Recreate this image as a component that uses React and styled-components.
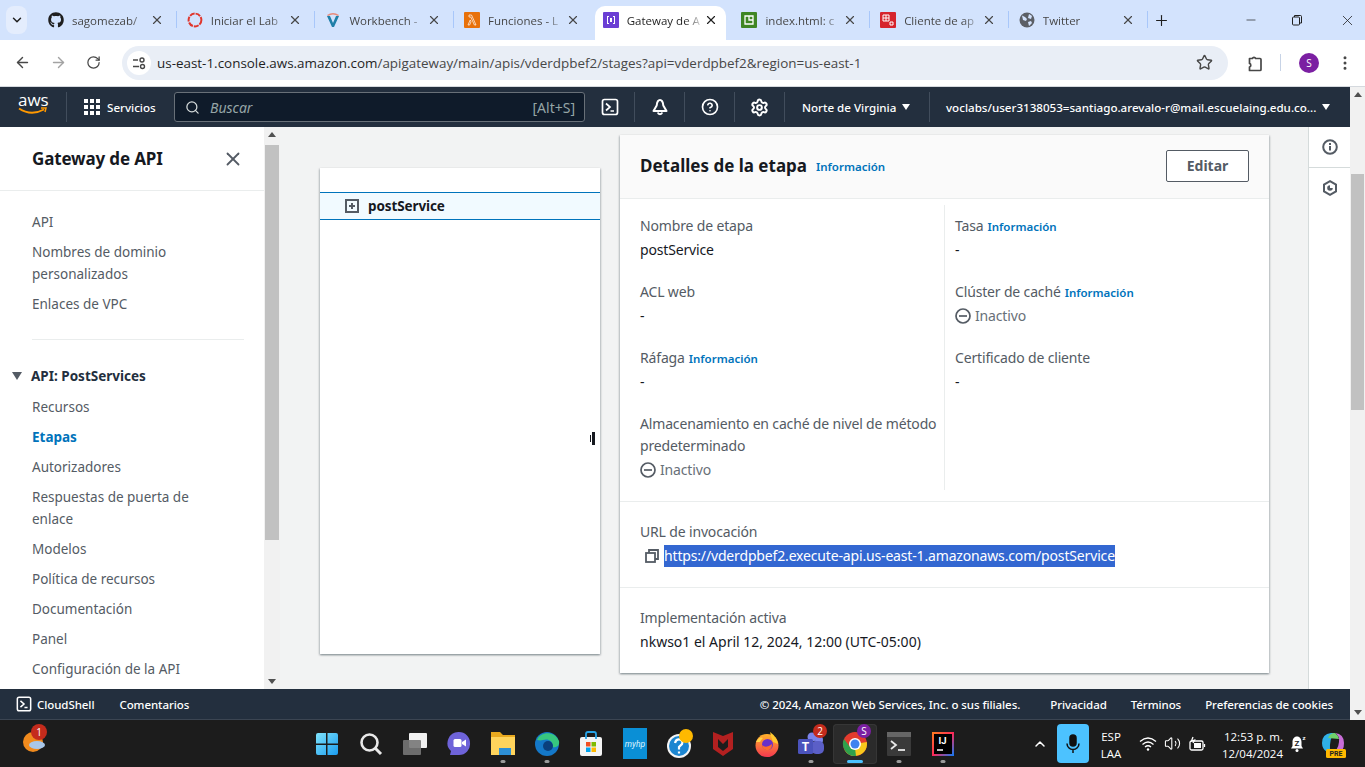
import React from "react";
import styled, { createGlobalStyle } from "styled-components";
import { FaGithub } from "react-icons/fa";
import {
  ChevronDown, X, Plus, Minus, ArrowLeft, ArrowRight, RotateCw, Star, EllipsisVertical,
  Search, CircleHelp, Settings, Volume2, ChevronUp,
} from "lucide-react";

const chromeFont = `"Open Sans", "Noto Sans", sans-serif`;
const awsFont = `"Noto Sans", "Open Sans", sans-serif`;

const Global = createGlobalStyle`
  html, body { margin: 0; padding: 0; height: 100%; overflow: hidden; background: #f2f3f3; }
  #root { height: 767px; width: 1365px; }
  * { box-sizing: border-box; }
`;

const Screen = styled.div`
  width: 1365px;
  height: 767px;
  display: flex;
  flex-direction: column;
  overflow: hidden;
  font-family: ${awsFont};
`;

/* browser top */
const TabStrip = styled.div`
  height: 40px;
  background: #d3e3fd;
  display: flex;
  align-items: flex-end;
  font-family: ${chromeFont};
  padding-left: 5px;
  flex: none;
`;
const TabSearch = styled.div`
  width: 21px;
  height: 28px;
  margin: 0 11px 6px 1px;
  border-radius: 8px;
  background: #e4edfd;
  display: flex;
  align-items: center;
  justify-content: center;
  color: #1f1f1f;
`;
const Tab = styled.div`
  width: 138.7px;
  height: 34px;
  display: flex;
  align-items: center;
  padding: 0 13px 6px 10px;
  position: relative;
  isolation: isolate;
  &::before {
    content: "";
    display: ${(p) => (p.$active ? "block" : "none")};
    position: absolute;
    inset: 0 5px 0 2px;
    z-index: -1;
    background: #fff;
    border-radius: 10px 10px 0 0;
  }
  &::after {
    content: "";
    display: ${(p) => (p.$sep ? "block" : "none")};
    position: absolute;
    right: 0;
    top: 5px;
    height: 17px;
    width: 1px;
    background: #a8c7fa;
  }
`;
const TabIcon = styled.span`
  width: 16px;
  height: 16px;
  flex: none;
  display: flex;
  align-items: center;
  justify-content: center;
  margin-right: 8px;
`;
const TabTitle = styled.span`
  flex: 1;
  font-size: 11.5px;
  white-space: nowrap;
  overflow: hidden;
  color: ${(p) => (p.$active ? "#1f1f1f" : "#474747")};
  -webkit-mask-image: linear-gradient(90deg, #000 75%, transparent 100%);
  mask-image: linear-gradient(90deg, #000 75%, transparent 100%);
`;
const NewTab = styled.div`
  width: 24px;
  margin: 0 0 11px 2px;
  display: flex;
  justify-content: center;
  color: #1f1f1f;
`;
const WinControls = styled.div`
  margin-left: auto;
  display: flex;
  align-self: flex-start;
  height: 40px;
  align-items: center;
  color: #1f1f1f;
`;
const WinButton = styled.div`
  width: ${(p) => p.$w || 46}px;
  margin-left: ${(p) => p.$ml || 0}px;
  display: flex;
  justify-content: center;
`;
const Toolbar = styled.div`
  height: 47px;
  flex: none;
  background: #fff;
  display: flex;
  align-items: center;
  padding: 0 0 1px 14px;
  border-bottom: 1px solid #d5d9de;
  font-family: ${chromeFont};
  color: #474747;
`;
const NavBtn = styled.div`
  width: 36px;
  display: flex;
  color: ${(p) => (p.$off ? "#a3a3a3" : "#474747")};
`;
const UrlPill = styled.div`
  width: 1106px;
  height: 34px;
  border-radius: 17px;
  background: #e9eef6;
  display: flex;
  align-items: center;
  padding: 0 15px 0 5px;
`;
const SiteChip = styled.div`
  width: 24px;
  height: 24px;
  border-radius: 50%;
  background: #fff;
  display: flex;
  align-items: center;
  justify-content: center;
  margin-right: 6px;
`;
const UrlText = styled.span`
  flex: 1;
  font-size: 13.43px;
  color: #1f1f1f;
  white-space: nowrap;
  span { color: #474747; }
`;
const ExtIcon = styled.svg`
  margin-left: 17px;
  flex: none;
`;
const ToolDivider = styled.div`
  width: 1px;
  height: 17px;
  background: #c7d3e6;
  margin: 0 18px 0 17px;
`;
const Avatar = styled.div`
  width: 20px;
  height: 20px;
  border-radius: 50%;
  background: #7b1fa2;
  color: #fff;
  font-size: 10px;
  display: flex;
  align-items: center;
  justify-content: center;
  margin-right: 17px;
`;

/* page + scroll */
const Viewport = styled.div`
  flex: 1;
  display: flex;
  min-height: 0;
`;
const Page = styled.div`
  flex: 1;
  display: flex;
  flex-direction: column;
  min-width: 0;
`;
const Scrollbar = styled.div`
  width: ${(p) => p.$w}px;
  flex: none;
  background: #f1f1f1;
  display: flex;
  flex-direction: column;
  align-items: center;
  justify-content: space-between;
  position: relative;
  padding: 5px 0;
`;
const Arrow = styled.div`
  width: 0;
  height: 0;
  border-left: 4px solid transparent;
  border-right: 4px solid transparent;
  ${(p) => (p.$down ? "border-top: 5px solid #505050;" : "border-bottom: 5px solid #505050;")}
`;
const Thumb = styled.div`
  position: absolute;
  left: 1px;
  right: 1px;
  top: ${(p) => p.$top}px;
  height: ${(p) => p.$h}px;
  background: #c1c1c1;
`;

/* aws nav */
const TopNav = styled.div`
  height: 40px;
  flex: none;
  background: #232f3e;
  display: flex;
  align-items: center;
  color: #fff;
  font-size: 11.6px;
  font-weight: 500;
`;
const LogoBox = styled.div`
  width: 67px;
  height: 30px;
  flex: none;
  padding-left: 18px;
  border-right: 1px solid #414d5c;
`;
const LogoWord = styled.div`
  font-family: "Open Sans", sans-serif;
  font-size: 17px;
  line-height: 17px;
  margin-top: -1px;
  color: #fff;
`;
const Smile = styled.svg`
  display: block;
  margin-top: -1px;
`;
const Services = styled.div`
  display: flex;
  align-items: center;
  width: 107px;
  padding-left: 17px;
  gap: 7px;
  flex: none;
`;
const Dots = styled.div`
  display: grid;
  grid-template-columns: repeat(3, 4px);
  gap: 2px;
  span { width: 4px; height: 4px; background: #fff; }
`;
const SearchBox = styled.div`
  width: 411px;
  height: 30px;
  flex: none;
  background: #0f1b2a;
  border: 1px solid #687078;
  border-radius: 3px;
  display: flex;
  align-items: center;
  padding: 0 9px 0 10px;
  color: #95a5a6;
  font-size: 14px;
  font-weight: 400;
`;
const SearchHint = styled.span`
  font-style: italic;
  margin-left: 10px;
  flex: 1;
`;
const NavIcon = styled.div`
  width: 50px;
  height: 30px;
  flex: none;
  display: flex;
  align-items: center;
  justify-content: center;
  border-right: 1px solid #414d5c;
`;
const NavText = styled.div`
  display: flex;
  align-items: center;
  white-space: nowrap;
  height: 30px;
  flex: none;
  padding: ${(p) => p.$pad};
  width: ${(p) => p.$w}px;
  ${(p) => (p.$sep ? "border-right: 1px solid #414d5c;" : "")}
`;
const Caret = styled.span`
  width: 0;
  height: 0;
  margin-left: 6px;
  border-left: 4.5px solid transparent;
  border-right: 4.5px solid transparent;
  border-top: 6px solid #fff;
  flex: none;
`;

/* body */
const Body = styled.div`
  flex: 1;
  display: flex;
  min-height: 0;
  background: #f2f3f3;
`;
const SideNav = styled.nav`
  width: 264px;
  flex: none;
  background: #fff;
  overflow: hidden;
  color: #545b64;
  font-size: 13.5px;
  line-height: 22px;
`;
const SideHead = styled.div`
  height: 64px;
  border-bottom: 1px solid #eaeded;
  display: flex;
  align-items: center;
  justify-content: space-between;
  padding: 0 20px 0 32px;
  color: #16191f;
  font-size: 17px;
  font-weight: 700;
  letter-spacing: -0.15px;
`;
const SideList = styled.div`
  padding: 20px 32px 0;
  display: flex;
  flex-direction: column;
  gap: 8px;
`;
const SideItem = styled.div`
  color: ${(p) => (p.$active ? "#0073bb" : "#545b64")};
  font-weight: ${(p) => (p.$active ? 700 : 400)};
`;
const SideRule = styled.div`
  height: 1px;
  background: #eaeded;
  margin: 24px 20px 25px 32px;
`;
const SideGroup = styled.div`
  display: flex;
  align-items: center;
  padding-left: 12px;
  color: #232f3e;
  font-weight: 700;
  font-size: 13.5px;
  margin-bottom: 9px;
`;
const GroupCaret = styled.span`
  width: 0;
  height: 0;
  border-left: 5.5px solid transparent;
  border-right: 5.5px solid transparent;
  border-top: 8px solid #545b64;
  margin-right: 9px;
`;
const SideSub = styled(SideList)`
  padding-top: 0;
`;
const Main = styled.main`
  flex: 1;
  min-width: 0;
  display: flex;
  align-items: flex-start;
  padding: 8px 0 0 40px;
  position: relative;
`;
const TreePanel = styled.div`
  width: 280px;
  height: 486px;
  margin-top: 33px;
  flex: none;
  background: #fff;
  box-shadow: 0 1px 2px rgba(0, 28, 36, 0.3), 1px 1px 2px rgba(0, 28, 36, 0.15), -1px 1px 2px rgba(0, 28, 36, 0.15);
  padding-top: 24px;
`;
const TreeRow = styled.div`
  height: 28px;
  background: #f1faff;
  border-top: 1px solid #0073bb;
  border-bottom: 1px solid #0073bb;
  display: flex;
  align-items: center;
  padding: 0 0 1px 25px;
  gap: 9px;
  color: #16191f;
  font-size: 13.5px;
  font-weight: 700;
  letter-spacing: -0.1px;
`;
const Grip = styled.div`
  position: absolute;
  left: 310px;
  top: 304px;
  width: 5px;
  height: 15px;
  display: flex;
  gap: 1px;
  align-items: center;
`;
const GripBar = styled.span`
  background: #16191f;
  width: ${(p) => p.$w}px;
  height: ${(p) => p.$h}px;
`;
const Card = styled.section`
  width: 649px;
  height: 538px;
  flex: none;
  margin-left: 20px;
  background: #fff;
  box-shadow: 0 1px 2px rgba(0, 28, 36, 0.3), 1px 1px 2px rgba(0, 28, 36, 0.15), -1px 1px 2px rgba(0, 28, 36, 0.15);
  display: flex;
  flex-direction: column;
  font-size: 14px;
  line-height: 22px;
  letter-spacing: -0.16px;
`;
const CardHead = styled.header`
  height: 64px;
  flex: none;
  background: #fafafa;
  border-bottom: 1px solid #eaeded;
  display: flex;
  align-items: center;
  padding: 0 20px 2px;
  letter-spacing: 0;
`;
const CardTitle = styled.h2`
  margin: 0 9px 0 0;
  font-size: 17px;
  font-weight: 700;
  color: #16191f;
`;
const Info = styled.a`
  color: #0073bb;
  font-size: 11.5px;
  font-weight: 600;
  line-height: 1;
  letter-spacing: 0;
  margin-left: ${(p) => p.$ml || 0}px;
  ${(p) => (p.$drop ? "margin-top: 3px;" : "")}
`;
const EditBtn = styled.button`
  margin-left: auto;
  width: 83px;
  height: 32px;
  background: #fff;
  border: 1px solid #545b64;
  border-radius: 2px;
  color: #545b64;
  font: 700 14px ${awsFont};
`;
const Columns = styled.div`
  display: grid;
  grid-template-columns: 325px 1fr;
  padding: 6px 0 11px;
  border-bottom: 1px solid #eaeded;
`;
const Col = styled.div`
  padding: 10px ${(p) => (p.$right ? 20 : 0)}px 0 ${(p) => (p.$right ? 10 : 20)}px;
  height: 285px;
  ${(p) => (p.$right ? "" : "border-right: 1px solid #eaeded;")}
  display: flex;
  flex-direction: column;
  gap: 20px;
`;
const Label = styled.div`
  color: #545b64;
  margin-bottom: 2px;
`;
const Value = styled.div`
  color: #16191f;
  ${(p) => (p.$wide ? "letter-spacing: 0;" : "")}
`;
const Status = styled.div`
  display: flex;
  align-items: center;
  gap: 4px;
  height: 22px;
  color: #687078;
`;
const Section = styled.div`
  padding: 19px 20px 0;
  height: ${(p) => p.$h}px;
  ${(p) => (p.$line ? "border-bottom: 1px solid #eaeded;" : "")}
  flex: none;
`;
const UrlRow = styled.div`
  display: flex;
  align-items: center;
  margin-top: 2px;
  padding-left: 5px;
  gap: 5px;
`;
const Selected = styled.span`
  background: #3367d1;
  color: #fff;
  white-space: nowrap;
`;
const RightRail = styled.aside`
  width: 42px;
  flex: none;
  background: #fff;
  border-left: 1px solid #d5dbdb;
  display: flex;
  flex-direction: column;
`;
const RailBtn = styled.div`
  height: ${(p) => p.$h}px;
  display: flex;
  align-items: center;
  justify-content: center;
  ${(p) => (p.$line ? "border-bottom: 1px solid #d5dbdb;" : "")}
`;

/* footer */
const Footer = styled.footer`
  height: 31px;
  flex: none;
  background: #232f3e;
  color: #fff;
  font-size: 11.5px;
  font-weight: 500;
  letter-spacing: -0.07px;
  display: flex;
  align-items: center;
  padding: 0 17px 0 16px;
  border-bottom: 1px solid #3b4552;
`;
const FootLink = styled.span`
  margin-left: ${(p) => p.$ml}px;
  white-space: nowrap;
  ${(p) => (p.$auto ? "margin-left: auto;" : "")}
`;
const ShellLink = styled.span`
  display: flex;
  align-items: center;
  gap: 5px;
`;

/* taskbar */
const Taskbar = styled.div`
  height: 47px;
  flex: none;
  background: #1c1c1c;
  display: flex;
  align-items: center;
  color: #fff;
  font-family: ${chromeFont};
`;
const Widgets = styled.div`
  width: 305px;
  flex: none;
  padding-left: 22px;
  position: relative;
`;
const Badge = styled.span`
  position: absolute;
  left: ${(p) => p.$l}px;
  top: ${(p) => p.$t}px;
  width: ${(p) => p.$s || 15}px;
  height: ${(p) => p.$s || 15}px;
  border-radius: 50%;
  background: ${(p) => p.$bg};
  font-size: 10px;
  color: #fff;
  display: flex;
  align-items: center;
  justify-content: center;
`;
const TaskIcons = styled.div`
  display: flex;
  align-items: center;
`;
const TaskIcon = styled.div`
  width: 44px;
  height: 40px;
  display: flex;
  align-items: center;
  justify-content: center;
  position: relative;
  border-radius: 4px;
  ${(p) => (p.$active ? "background: #2b2b2b; box-shadow: inset 0 0 0 1px #363636;" : "")}
  &::after {
    content: "";
    display: ${(p) => (p.$dot || p.$active ? "block" : "none")};
    position: absolute;
    bottom: 1px;
    left: 50%;
    transform: translateX(-50%);
    height: 3px;
    border-radius: 2px;
    width: ${(p) => (p.$active ? 16 : 5)}px;
    background: ${(p) => (p.$active ? "#4cc2ff" : "#9a9a9a")};
  }
`;
const Tray = styled.div`
  margin-left: auto;
  display: flex;
  align-items: center;
  height: 100%;
`;
const MicBtn = styled.div`
  width: 32px;
  height: 39px;
  margin: 0 0 0 9px;
  border-radius: 4px;
  background: #4cc2ff;
  display: flex;
  align-items: center;
  justify-content: center;
`;
const Lang = styled.div`
  width: 44px;
  text-align: center;
  font-size: 11.5px;
  line-height: 17px;
  margin-top: 3px;
`;
const TrayIcons = styled.div`
  display: flex;
  align-items: center;
  gap: 7px;
  width: 80px;
  margin-left: 6px;
`;
const Clock = styled.div`
  width: 66px;
  text-align: right;
  font-size: 11.5px;
  line-height: 17px;
  margin: 3px 0 0 -2px;
  white-space: nowrap;
`;
const BellIcon = styled.svg`
  margin-left: 6px;
`;
const CopilotIcon = styled.svg`
  margin: 0 19px 0 13px;
`;

function TerminalGlyph({ size = 18, color = "#fff" }) {
  return (
    <svg width={size} height={size} viewBox="0 0 18 18" fill="none" stroke={color} strokeWidth="1.7">
      <rect x="1.5" y="1.5" width="15" height="15" rx="2" />
      <path d="M5 5.5 9 9l-4 3.5M9.5 13H13" />
    </svg>
  );
}

function Aws16({ bg, children }) {
  return (
    <svg width="16" height="16" viewBox="0 0 16 16">
      <rect width="16" height="16" fill={bg} rx="1" />
      {children}
    </svg>
  );
}

const tabs = [
  { title: "sagomezab/", sep: true, icon: <FaGithub size={16} color="#1f1f1f" /> },
  {
    title: "Iniciar el Lab",
    sep: true,
    icon: (
      <svg width="16" height="16" viewBox="0 0 16 16" fill="none">
        <circle cx="8" cy="8" r="6.4" stroke="#e0362c" strokeWidth="2" strokeDasharray="5 1" />
      </svg>
    ),
  },
  {
    title: "Workbench -",
    sep: true,
    icon: (
      <svg width="16" height="16" viewBox="0 0 16 16">
        <path d="M2 4h3l3 7 3-7h3l-5 11H7z" fill="#1f7fa8" />
        <path d="M2 3q6-4 12 0l-1 1q-5-3-10 0z" fill="#e98a7a" />
      </svg>
    ),
  },
  {
    title: "Funciones - L",
    icon: (
      <Aws16 bg="#e8710a">
        <path d="M5 3h2.5L12 13h-1.6L6.8 5H5zM6.2 8 4 13h1.6L7 9.8z" fill="none" stroke="#fff" strokeWidth=".7" />
      </Aws16>
    ),
  },
  {
    title: "Gateway de A",
    active: true,
    icon: (
      <Aws16 bg="#6b3fd4">
        <path d="M4 4h2v1H5v6h1v1H4zM12 4h-2v1h1v6h-1v1h2zM7 6h2v4H7z" fill="#fff" />
      </Aws16>
    ),
  },
  {
    title: "index.html: c",
    sep: true,
    icon: (
      <Aws16 bg="#3f8624">
        <path d="M4 4h8v8H4zM8 4v4h4" fill="none" stroke="#fff" strokeWidth="1.3" />
      </Aws16>
    ),
  },
  {
    title: "Cliente de ap",
    sep: true,
    icon: (
      <Aws16 bg="#d6242d">
        <path d="M3 3h6v6H3zM3 6h6M6 3v6M10 10h3v3h-3z" fill="none" stroke="#fff" strokeWidth="1" />
      </Aws16>
    ),
  },
  {
    title: "Twitter",
    sep: true,
    icon: (
      <svg width="16" height="16" viewBox="0 0 16 16">
        <circle cx="8" cy="8" r="7.5" fill="#5b5f66" />
        <path d="M3 3.500 6 5l2 2-1 2-3-1zM10 2l3 2-1 3-3-1zM9 10l3-1 1 2-3 3z" fill="#d3e3fd" />
      </svg>
    ),
  },
];

function MinusCircle() {
  return (
    <svg width="16" height="16" viewBox="0 0 16 16" fill="none" stroke="#545b64" strokeWidth="1.7">
      <circle cx="8" cy="8" r="7" />
      <path d="M4 8h8" />
    </svg>
  );
}

function Field({ label, info, children }) {
  return (
    <div>
      <Label>
        {label}
        {info && <Info $ml={4}>Información</Info>}
      </Label>
      {children}
    </div>
  );
}

const sideTop = ["API", "Nombres de dominio personalizados", "Enlaces de VPC"];
const sideSub = [
  "Recursos", "Etapas", "Autorizadores", "Respuestas de puerta de enlace", "Modelos",
  "Política de recursos", "Documentación", "Panel", "Configuración de la API",
];

const taskIcons = [
  <svg width="24" height="24" viewBox="0 0 24 24" key="win">
    <defs>
      <linearGradient id="w" x1="0" y1="0" x2="1" y2="1">
        <stop offset="0" stopColor="#7fe3fb" />
        <stop offset="1" stopColor="#1a9cf0" />
      </linearGradient>
    </defs>
    <path d="M1 3q0-2 2-2h8v10.500H1zM12.500 1H21q2 0 2 2v8.500H12.500zM1 13h10v10H3q-2 0-2-2zM12.500 13H23v8q0 2-2 2h-8.500z" fill="url(#w)" />
  </svg>,
  <svg width="24" height="24" viewBox="0 0 24 24" fill="none" key="s">
    <circle cx="10.500" cy="10.500" r="8" stroke="#e8e8e8" strokeWidth="2.600" />
    <path d="m16 16 6 6" stroke="#e8e8e8" strokeWidth="3" />
  </svg>,
  <svg width="24" height="24" viewBox="0 0 24 24" key="t">
    <rect x="6" y="1" width="18" height="15" rx="1" fill="#f0f0f0" />
    <rect x="0" y="8" width="18" height="15" rx="1" fill="#777" opacity=".9" />
  </svg>,
  <svg width="24" height="26" viewBox="0 0 24 26" key="m">
    <path d="M12 1a11 11 0 0 1 11 11 11 11 0 0 1-11 12H3l1-4a11 11 0 0 1 8-19z" fill="#6e63d9" />
    <rect x="6.500" y="8" width="8" height="8" rx="1.500" fill="#fff" />
    <path d="m15 11 4-2.500v7L15 13z" fill="#fff" />
  </svg>,
  <svg width="26" height="26" viewBox="0 0 26 26" key="f">
    <path d="M1 1h9l3 3h12v20H1z" fill="#e9a91f" />
    <rect x="1" y="6" width="24" height="18" fill="#ffd45c" />
    <rect x="9" y="17" width="12" height="7" fill="#2d8fd5" />
  </svg>,
  <svg width="26" height="26" viewBox="0 0 26 26" key="e">
    <circle cx="13" cy="13" r="12" fill="#1478c8" />
    <path d="M3 9C6 1 20-1 25 10c1 5-3 7-7 6 2-5-3-9-9-7-3 1-4 0-6 0z" fill="#37c77f" />
    <circle cx="14" cy="15" r="5" fill="#0a3f7d" />
  </svg>,
  <svg width="24" height="26" viewBox="0 0 24 26" key="st">
    <rect x="1" y="6" width="22" height="19" rx="2" fill="#f4f4f4" />
    <path d="M7 8V3q0-2 2-2h6q2 0 2 2v5" fill="none" stroke="#27a4e8" strokeWidth="1.800" />
    <rect x="7" y="11" width="4.500" height="4.500" fill="#f25022" />
    <rect x="12.500" y="11" width="4.500" height="4.500" fill="#7fba00" />
    <rect x="7" y="16.500" width="4.500" height="4.500" fill="#00a4ef" />
    <rect x="12.500" y="16.500" width="4.500" height="4.500" fill="#ffb900" />
  </svg>,
  <svg width="24" height="31" viewBox="0 0 24 31" key="hp">
    <rect width="24" height="31" fill="#0a8fd6" />
    <text x="12" y="19" fontSize="8.500" fontStyle="italic" textAnchor="middle" fill="#dff3ff" fontFamily="Roboto, sans-serif">myhp</text>
  </svg>,
  <svg width="28" height="30" viewBox="0 0 28 30" key="q">
    <circle cx="14" cy="17" r="12" fill="#f5f5f5" />
    <circle cx="14" cy="17" r="10" fill="#1c86d1" />
    <path d="M10 14q1-4 4.500-3.500 4 1 2.500 4.500L14 18v2.500M14 22.500v2" stroke="#fff" strokeWidth="2.200" fill="none" />
    <circle cx="21" cy="7" r="7" fill="#ffb900" />
  </svg>,
  <svg width="22" height="26" viewBox="0 0 22 26" key="mc">
    <path d="M1 1l10 4 10-4v17l-10 7-10-7z" fill="#b32020" />
    <path d="M6 8l5 5 5-5v8l-5 4-5-4z" fill="#1c1c1c" />
  </svg>,
  <svg width="24" height="26" viewBox="0 0 24 26" key="ff">
    <defs>
      <linearGradient id="fx" x1="0" y1="0" x2="0" y2="1">
        <stop offset="0" stopColor="#ffb12a" />
        <stop offset="1" stopColor="#f5384f" />
      </linearGradient>
    </defs>
    <circle cx="12" cy="14.500" r="11.500" fill="url(#fx)" />
    <path d="M15 1q7 5 8 12l-5-2q-2-5-3-10z" fill="#ffc92e" />
    <path d="M1 11q3-6 7-4-2 2-3 4z" fill="#ffd24a" />
    <circle cx="12.500" cy="13.500" r="5.500" fill="#6a2fc9" />
    <path d="M7 14q4 4 10-1 0 7-6 6-4-1-4-5z" fill="#ff6b2c" />
  </svg>,
  <svg width="28" height="26" viewBox="0 0 28 26" key="tm">
    <circle cx="22" cy="9" r="4" fill="#7b83eb" />
    <rect x="14" y="10" width="13" height="13" rx="5" fill="#5b5fc7" />
    <circle cx="15" cy="6" r="4.500" fill="#7b83eb" />
    <rect x="1" y="8" width="15" height="15" rx="1.500" fill="#4b53bc" />
    <text x="8.500" y="20" fontSize="12" fontWeight="700" textAnchor="middle" fill="#fff" fontFamily="Roboto, sans-serif">T</text>
  </svg>,
  <svg width="26" height="26" viewBox="0 0 26 26" key="c">
    <circle cx="13" cy="13" r="12" fill="#e33b2e" />
    <path d="M13 13 24.800 11A12 12 0 0 1 13 25 12 12 0 0 1 2.600 19z" fill="#f8c81c" />
    <path d="M2.600 19A12 12 0 0 1 2 8l6 8 5 1 1 8A12 12 0 0 1 2.600 19z" fill="#2fa14c" />
    <circle cx="13" cy="13" r="6" fill="#fff" />
    <circle cx="13" cy="13" r="4.500" fill="#3f82f0" />
  </svg>,
  <svg width="24" height="24" viewBox="0 0 24 24" fill="none" key="tt">
    <rect width="24" height="24" rx="1" fill="#3a3a3a" />
    <rect width="24" height="5" fill="#666" />
    <path d="m4 9 5 4-5 4" stroke="#e8e8e8" strokeWidth="1.800" />
    <path d="M11 18h7" stroke="#e8e8e8" strokeWidth="1.800" />
  </svg>,
  <svg width="22" height="24" viewBox="0 0 22 24" key="ij">
    <defs>
      <linearGradient id="ijb" x1="0" y1="0" x2="1" y2="1">
        <stop offset="0" stopColor="#fc801d" />
        <stop offset=".5" stopColor="#fe2857" />
        <stop offset="1" stopColor="#087cfa" />
      </linearGradient>
    </defs>
    <rect width="22" height="24" fill="url(#ijb)" />
    <rect x="2" y="2" width="18" height="20" fill="#000" />
    <text x="10.500" y="12" fontSize="9.500" fontWeight="700" textAnchor="middle" fill="#fff" fontFamily="Roboto, sans-serif">IJ</text>
    <path d="M5 18h6" stroke="#fff" strokeWidth="1.500" />
  </svg>,
];

export default function App() {
  return (
    <Screen>
      <Global />
      <TabStrip>
        <TabSearch>
          <ChevronDown size={14} strokeWidth={2.5} />
        </TabSearch>
        {tabs.map((t) => (
          <Tab key={t.title} $active={t.active} $sep={t.sep}>
            <TabIcon>{t.icon}</TabIcon>
            <TabTitle $active={t.active}>{t.title}</TabTitle>
            <X size={14} strokeWidth={2} color={t.active ? "#1f1f1f" : "#474747"} />
          </Tab>
        ))}
        <NewTab>
          <Plus size={17} strokeWidth={1.6} />
        </NewTab>
        <WinControls>
          <WinButton><Minus size={14} strokeWidth={1.2} /></WinButton>
          <WinButton>
            <svg width="12" height="12" viewBox="0 0 12 12" fill="none" stroke="#1f1f1f">
              <rect x="1.500" y="3" width="7" height="8" rx="1" />
              <path d="M3.500 3V1.500h6a1 1 0 0 1 1 1V9H8.500" />
            </svg>
          </WinButton>
          <WinButton $w={36} $ml={9}><X size={17} strokeWidth={1.1} /></WinButton>
        </WinControls>
      </TabStrip>
      <Toolbar>
        <NavBtn><ArrowLeft size={17} strokeWidth={2} /></NavBtn>
        <NavBtn $off><ArrowRight size={17} strokeWidth={2} /></NavBtn>
        <NavBtn><RotateCw size={15} strokeWidth={2} /></NavBtn>
        <UrlPill>
          <SiteChip>
            <svg width="14" height="14" viewBox="0 0 14 14" fill="none" stroke="#474747" strokeWidth="1.400">
              <path d="M1 4h5M1 10.500h6" />
              <circle cx="10" cy="4" r="2" />
              <circle cx="10.500" cy="10.500" r="2" />
            </svg>
          </SiteChip>
          <UrlText>
            us-east-1.console.aws.amazon.com<span>/apigateway/main/apis/vderdpbef2/stages?api=vderdpbef2&amp;region=us-east-1</span>
          </UrlText>
          <Star size={17} strokeWidth={2} color="#474747" />
        </UrlPill>
        <ExtIcon width="18" height="18" viewBox="0 0 18 18" fill="none" stroke="#474747" strokeWidth="1.700" strokeLinejoin="round">
          <path d="M4.500 4.500H7.300a1.900 1.900 0 0 1 3.400 0H15q1 0 1 1v10q0 1-1 1H4.500v-3.500a1.900 1.900 0 0 0 0-3.600z" />
        </ExtIcon>
        <ToolDivider />
        <Avatar>S</Avatar>
        <EllipsisVertical size={18} color="#474747" />
      </Toolbar>
      <Viewport>
        <Page>
          <TopNav>
            <LogoBox>
              <LogoWord>aws</LogoWord>
              <Smile width="30" height="9" viewBox="0 0 30 9" fill="none">
                <path d="M1 1.500q12 8 25 1" stroke="#ff9900" strokeWidth="1.800" />
                <path d="M23 1h5l-1 4" stroke="#ff9900" strokeWidth="1.500" />
              </Smile>
            </LogoBox>
            <Services>
              <Dots>{Array.from({ length: 9 }).map((_, i) => <span key={i} />)}</Dots>
              Servicios
            </Services>
            <SearchBox>
              <Search size={15} strokeWidth={2} color="#d5dbdb" />
              <SearchHint>Buscar</SearchHint>
              [Alt+S]
            </SearchBox>
            <NavIcon><TerminalGlyph /></NavIcon>
            <NavIcon>
              <svg width="18" height="18" viewBox="0 0 18 18" fill="none" stroke="#fff" strokeWidth="2">
                <path d="M9 2C6.500 2 6 4.500 5.700 7.500L2.500 13h13l-3.200-5.500C12 4.500 11.500 2 9 2z" strokeLinejoin="round" />
                <path d="M6.800 14.500a2.300 2.300 0 0 0 4.400 0" />
              </svg>
            </NavIcon>
            <NavIcon><CircleHelp size={18} strokeWidth={2.200} color="#fff" /></NavIcon>
            <NavIcon><Settings size={19} strokeWidth={2.500} color="#fff" /></NavIcon>
            <NavText $pad="0 0 0 17px" $w={145} $sep>Norte de Virginia<Caret /></NavText>
            <NavText $pad="0 0 0 16px" $w={400}>voclabs/user3138053=santiago.arevalo-r@mail.escuelaing.edu.co...<Caret /></NavText>
          </TopNav>
          <Body>
            <SideNav>
              <SideHead>
                Gateway de API
                <X size={22} strokeWidth={2} color="#545b64" />
              </SideHead>
              <SideList>
                {sideTop.map((s) => <SideItem key={s}>{s}</SideItem>)}
              </SideList>
              <SideRule />
              <SideGroup><GroupCaret />API: PostServices</SideGroup>
              <SideSub>
                {sideSub.map((s) => <SideItem key={s} $active={s === "Etapas"}>{s}</SideItem>)}
              </SideSub>
            </SideNav>
            <Scrollbar $w={16}>
              <Arrow />
              <Thumb $top={18} $h={395} />
              <Arrow $down />
            </Scrollbar>
            <Main>
              <TreePanel>
                <TreeRow>
                  <svg width="14" height="14" viewBox="0 0 14 14" fill="none" stroke="#545b64" strokeWidth="2">
                    <rect x="1" y="1" width="12" height="12" />
                    <path d="M4 7h6M7 4v6" />
                  </svg>
                  postService
                </TreeRow>
              </TreePanel>
              <Grip><GripBar $w={1} $h={7} /><GripBar $w={3} $h={13} /></Grip>
              <Card>
                <CardHead>
                  <CardTitle>Detalles de la etapa</CardTitle>
                  <Info $drop>Información</Info>
                  <EditBtn>Editar</EditBtn>
                </CardHead>
                <Columns>
                  <Col>
                    <Field label="Nombre de etapa"><Value>postService</Value></Field>
                    <Field label="ACL web"><Value>-</Value></Field>
                    <Field label="Ráfaga" info><Value>-</Value></Field>
                    <Field label="Almacenamiento en caché de nivel de método predeterminado">
                      <Status><MinusCircle />Inactivo</Status>
                    </Field>
                  </Col>
                  <Col $right>
                    <Field label="Tasa" info><Value>-</Value></Field>
                    <Field label="Clúster de caché" info>
                      <Status><MinusCircle />Inactivo</Status>
                    </Field>
                    <Field label="Certificado de cliente"><Value>-</Value></Field>
                  </Col>
                </Columns>
                <Section $h={86} $line>
                  <Label>URL de invocación</Label>
                  <UrlRow>
                    <svg width="14" height="14" viewBox="0 0 14 14" fill="none" stroke="#545b64" strokeWidth="1.800">
                      <rect x="1" y="4" width="9" height="9" />
                      <path d="M4 4V1h9v9h-3" />
                    </svg>
                    <Selected>https://vderdpbef2.execute-api.us-east-1.amazonaws.com/postService</Selected>
                  </UrlRow>
                </Section>
                <Section $h={85}>
                  <Label>Implementación activa</Label>
                  <Value $wide>nkwso1 el April 12, 2024, 12:00 (UTC-05:00)</Value>
                </Section>
              </Card>
            </Main>
            <RightRail>
              <RailBtn $h={41} $line>
                <svg width="16" height="16" viewBox="0 0 16 16" fill="none" stroke="#545b64" strokeWidth="2">
                  <circle cx="8" cy="8" r="6.800" />
                  <path d="M8 7v4.500M8 4v2" />
                </svg>
              </RailBtn>
              <RailBtn $h={40}>
                <svg width="16" height="16" viewBox="0 0 16 16" fill="none" stroke="#545b64" strokeWidth="2">
                  <path d="M8 1.200l6 3.400v6.800l-6 3.400-6-3.400V4.600z" />
                  <path d="M8 5.200a2.800 2.800 0 1 0 2.800 2.800H8z" fill="#545b64" stroke="none" />
                </svg>
              </RailBtn>
            </RightRail>
          </Body>
          <Footer>
            <ShellLink><TerminalGlyph size={16} />CloudShell</ShellLink>
            <FootLink $ml={25}>Comentarios</FootLink>
            <FootLink $auto>© 2024, Amazon Web Services, Inc. o sus filiales.</FootLink>
            <FootLink $ml={30}>Privacidad</FootLink>
            <FootLink $ml={24}>Términos</FootLink>
            <FootLink $ml={24}>Preferencias de cookies</FootLink>
          </Footer>
        </Page>
        <Scrollbar $w={15}>
          <Arrow />
          <Thumb $top={87} $h={236} />
          <Arrow $down />
        </Scrollbar>
      </Viewport>
      <Taskbar>
        <Widgets>
          <svg width="24" height="26" viewBox="0 0 24 26">
            <circle cx="11" cy="14" r="10" fill="#f08a1d" />
            <ellipse cx="15" cy="17" rx="8" ry="4" fill="#a9c7ea" />
          </svg>
          <Badge $l={31} $t={-4} $s={16} $bg="#c42b1c">1</Badge>
        </Widgets>
        <TaskIcons>
          {taskIcons.map((icon, i) => (
            <TaskIcon key={i} $dot={[4, 5, 11, 13, 14].includes(i)} $active={i === 12}>
              {icon}
              {i === 11 && <Badge $l={24} $t={0} $s={14} $bg="#c42b1c">2</Badge>}
              {i === 12 && <Badge $l={24} $t={0} $s={14} $bg="#7b1fa2">S</Badge>}
            </TaskIcon>
          ))}
        </TaskIcons>
        <Tray>
          <ChevronUp size={16} strokeWidth={2.200} />
          <MicBtn>
            <svg width="16" height="20" viewBox="0 0 16 20" fill="none" stroke="#111" strokeWidth="1.500">
              <rect x="5" y="1" width="6" height="11" rx="3" fill="#111" />
              <path d="M2 9.500a6 6 0 0 0 12 0M8 15.500V19" />
            </svg>
          </MicBtn>
          <Lang>ESP<br />LAA</Lang>
          <TrayIcons>
            <svg width="18" height="16" viewBox="0 0 18 16" fill="none" stroke="#fff" strokeWidth="1.300">
              <path d="M1 5.500q8-7 16 0M3.500 8.500q5.500-5 11 0M6 11q3-2.500 6 0" />
              <circle cx="9" cy="13.500" r="1.200" fill="#fff" stroke="none" />
            </svg>
            <Volume2 size={17} strokeWidth={1.500} />
            <svg width="18" height="16" viewBox="0 0 18 16" fill="none" stroke="#fff" strokeWidth="1.300">
              <rect x="2" y="5" width="13" height="9" rx="1.500" />
              <rect x="6" y="7" width="7" height="5" fill="#fff" stroke="none" />
              <path d="M16.500 8v3M5 1 3.500 5l3-1L5 7" />
            </svg>
          </TrayIcons>
          <Clock>12:53 p. m.<br />12/04/2024</Clock>
          <BellIcon width="18" height="18" viewBox="0 0 18 18">
            <path d="M8 1.500C5 1.500 3.500 4 3.500 7v4L2 13.500h12L12.500 11V7C12.500 4 11 1.500 8 1.500z" fill="#fff" />
            <circle cx="8" cy="15.500" r="1.500" fill="#fff" />
            <text x="8" y="11" fontSize="8" fontWeight="700" textAnchor="middle" fill="#1c1c1c" fontFamily="Roboto, sans-serif">Z</text>
            <text x="15" y="5" fontSize="6" fontWeight="700" textAnchor="middle" fill="#fff" fontFamily="Roboto, sans-serif">z</text>
          </BellIcon>
          <CopilotIcon width="26" height="28" viewBox="0 0 26 28">
            <path d="M2 13q0-9 9-10h4q-6 4-5 19H7q-5-3-5-9z" fill="#2fb0e8" />
            <path d="M12 22q6-1 7-10 1-6-4-9 9 1 9 10 0 8-5 9z" fill="#c86dd7" />
            <path d="M8 8q2-5 7-5 3 2 4 6z" fill="#6fd06a" />
            <rect x="6" y="19" width="20" height="9" rx="1.500" fill="#ffb900" />
            <text x="16" y="26.300" fontSize="7" fontWeight="700" textAnchor="middle" fill="#222" fontFamily="Roboto, sans-serif">PRE</text>
          </CopilotIcon>
        </Tray>
      </Taskbar>
    </Screen>
  );
}
